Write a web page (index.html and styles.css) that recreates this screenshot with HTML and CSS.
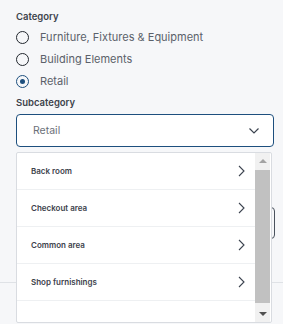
FILE: index.html
```html
<!DOCTYPE html>
<html lang="en">
<head>
    <meta charset="UTF-8">
    <meta name="viewport" content="width=device-width, initial-scale=1.0">
    <title>Category picker</title>
    <link rel="stylesheet" href="styles.css">
</head>
<body>
    <div class="panel">
        <div class="field-label">Category</div>
        <div class="radio-list">
            <label class="radio"><span class="radio-mark"></span>Furniture, Fixtures &amp; Equipment</label>
            <label class="radio"><span class="radio-mark"></span>Building Elements</label>
            <label class="radio checked"><span class="radio-mark"></span>Retail</label>
        </div>

        <div class="field-label sub">Subcategory</div>
        <div class="select-wrap">
            <div class="select">
                <span class="select-value">Retail</span>
                <svg class="chevron-down" width="10" height="6" viewBox="0 0 10 6"><path d="M0.5 0.5l4.5 4.5 4.5-4.5" fill="none" stroke="#3c4450" stroke-width="1.2"/></svg>
            </div>

            <!-- Open dropdown list -->
            <div class="dropdown">
                <div class="options">
                    <div class="option">Back room<svg width="7" height="12" viewBox="0 0 7 12"><path d="M1 1l5 5-5 5" fill="none" stroke="#3c4450" stroke-width="1.1"/></svg></div>
                    <div class="option">Checkout area<svg width="7" height="12" viewBox="0 0 7 12"><path d="M1 1l5 5-5 5" fill="none" stroke="#3c4450" stroke-width="1.1"/></svg></div>
                    <div class="option">Common area<svg width="7" height="12" viewBox="0 0 7 12"><path d="M1 1l5 5-5 5" fill="none" stroke="#3c4450" stroke-width="1.1"/></svg></div>
                    <div class="option">Shop furnishings<svg width="7" height="12" viewBox="0 0 7 12"><path d="M1 1l5 5-5 5" fill="none" stroke="#3c4450" stroke-width="1.1"/></svg></div>
                </div>
                <div class="scrollbar">
                    <div class="scroll-btn up"></div>
                    <div class="scroll-thumb"></div>
                    <div class="scroll-btn down"></div>
                </div>
            </div>
        </div>

        <!-- Hidden under the dropdown -->
        <div class="hidden-field"></div>
    </div>
    <div class="footer"></div>
</body>
</html>
```

FILE: styles.css
```css
body {
    font-family: Inter, "Noto Sans", sans-serif;
    margin: 0;
    padding: 0;
    background: #f6f7f9;
    height: 324px;
    overflow: hidden;
}

.panel {
    padding: 10px 9px 0 16px;
}

.field-label {
    font-size: 9.5px;
    font-weight: 600;
    color: #3d434c;
    line-height: 13px;
}

.field-label.sub {
    margin-top: 7px;
}

.radio-list {
    display: flex;
    flex-direction: column;
    gap: 7px;
    margin-top: 7px;
}

.radio {
    display: flex;
    align-items: center;
    gap: 11px;
    font-size: 11px;
    color: #5b616a;
    line-height: 15px;
}

.radio-mark {
    width: 13px;
    height: 13px;
    box-sizing: border-box;
    border: 1.5px solid #22272e;
    border-radius: 50%;
    display: flex;
    align-items: center;
    justify-content: center;
}

.radio.checked .radio-mark {
    border-color: #1d4f7e;
}

.radio.checked .radio-mark::after {
    content: "";
    width: 5px;
    height: 5px;
    border-radius: 50%;
    background: #1d4f7e;
}

.select-wrap {
    position: relative;
    margin-top: 5px;
}

.select {
    height: 33px;
    box-sizing: border-box;
    border: 1.5px solid #1d4f7e;
    border-radius: 4px;
    background: #fff;
    display: flex;
    align-items: center;
    justify-content: space-between;
    padding: 0 14px 0 16px;
}

.select-value {
    font-size: 10.5px;
    color: #6b7078;
}

.dropdown {
    position: absolute;
    top: 38px;
    left: 0;
    width: 256px;
    height: 171px;
    box-sizing: border-box;
    background: #fff;
    border: 1px solid #d9dce1;
    border-radius: 2px;
    display: flex;
    padding-right: 1px;
    z-index: 2;
}

.options {
    flex: 1;
    overflow: hidden;
}

.option {
    height: 36px;
    border-bottom: 1px solid #eef0f2;
    display: flex;
    align-items: center;
    justify-content: space-between;
    padding: 0 10px 0 14px;
    font-size: 8px;
    font-weight: 600;
    color: #3d434c;
}

.scrollbar {
    width: 15px;
    background: #f1f1f1;
    display: flex;
    flex-direction: column;
}

.scroll-btn {
    height: 16px;
    display: flex;
    align-items: center;
    justify-content: center;
}

.scroll-btn::after {
    content: "";
    border-left: 4px solid transparent;
    border-right: 4px solid transparent;
}

.scroll-btn.up::after {
    border-bottom: 4px solid #a3a3a3;
}

.scroll-btn.down::after {
    border-top: 4px solid #505050;
}

.scroll-thumb {
    flex: 1;
    margin: 1px 0 3px;
    background: #c1c1c1;
}

.hidden-field {
    margin-top: 60px;
    height: 32px;
    margin-right: -1px;
    box-sizing: border-box;
    border: 1px solid #4a525d;
    border-radius: 4px;
}

.footer {
    margin-top: 43px;
    border-top: 1px solid #dfe2e6;
}
```
